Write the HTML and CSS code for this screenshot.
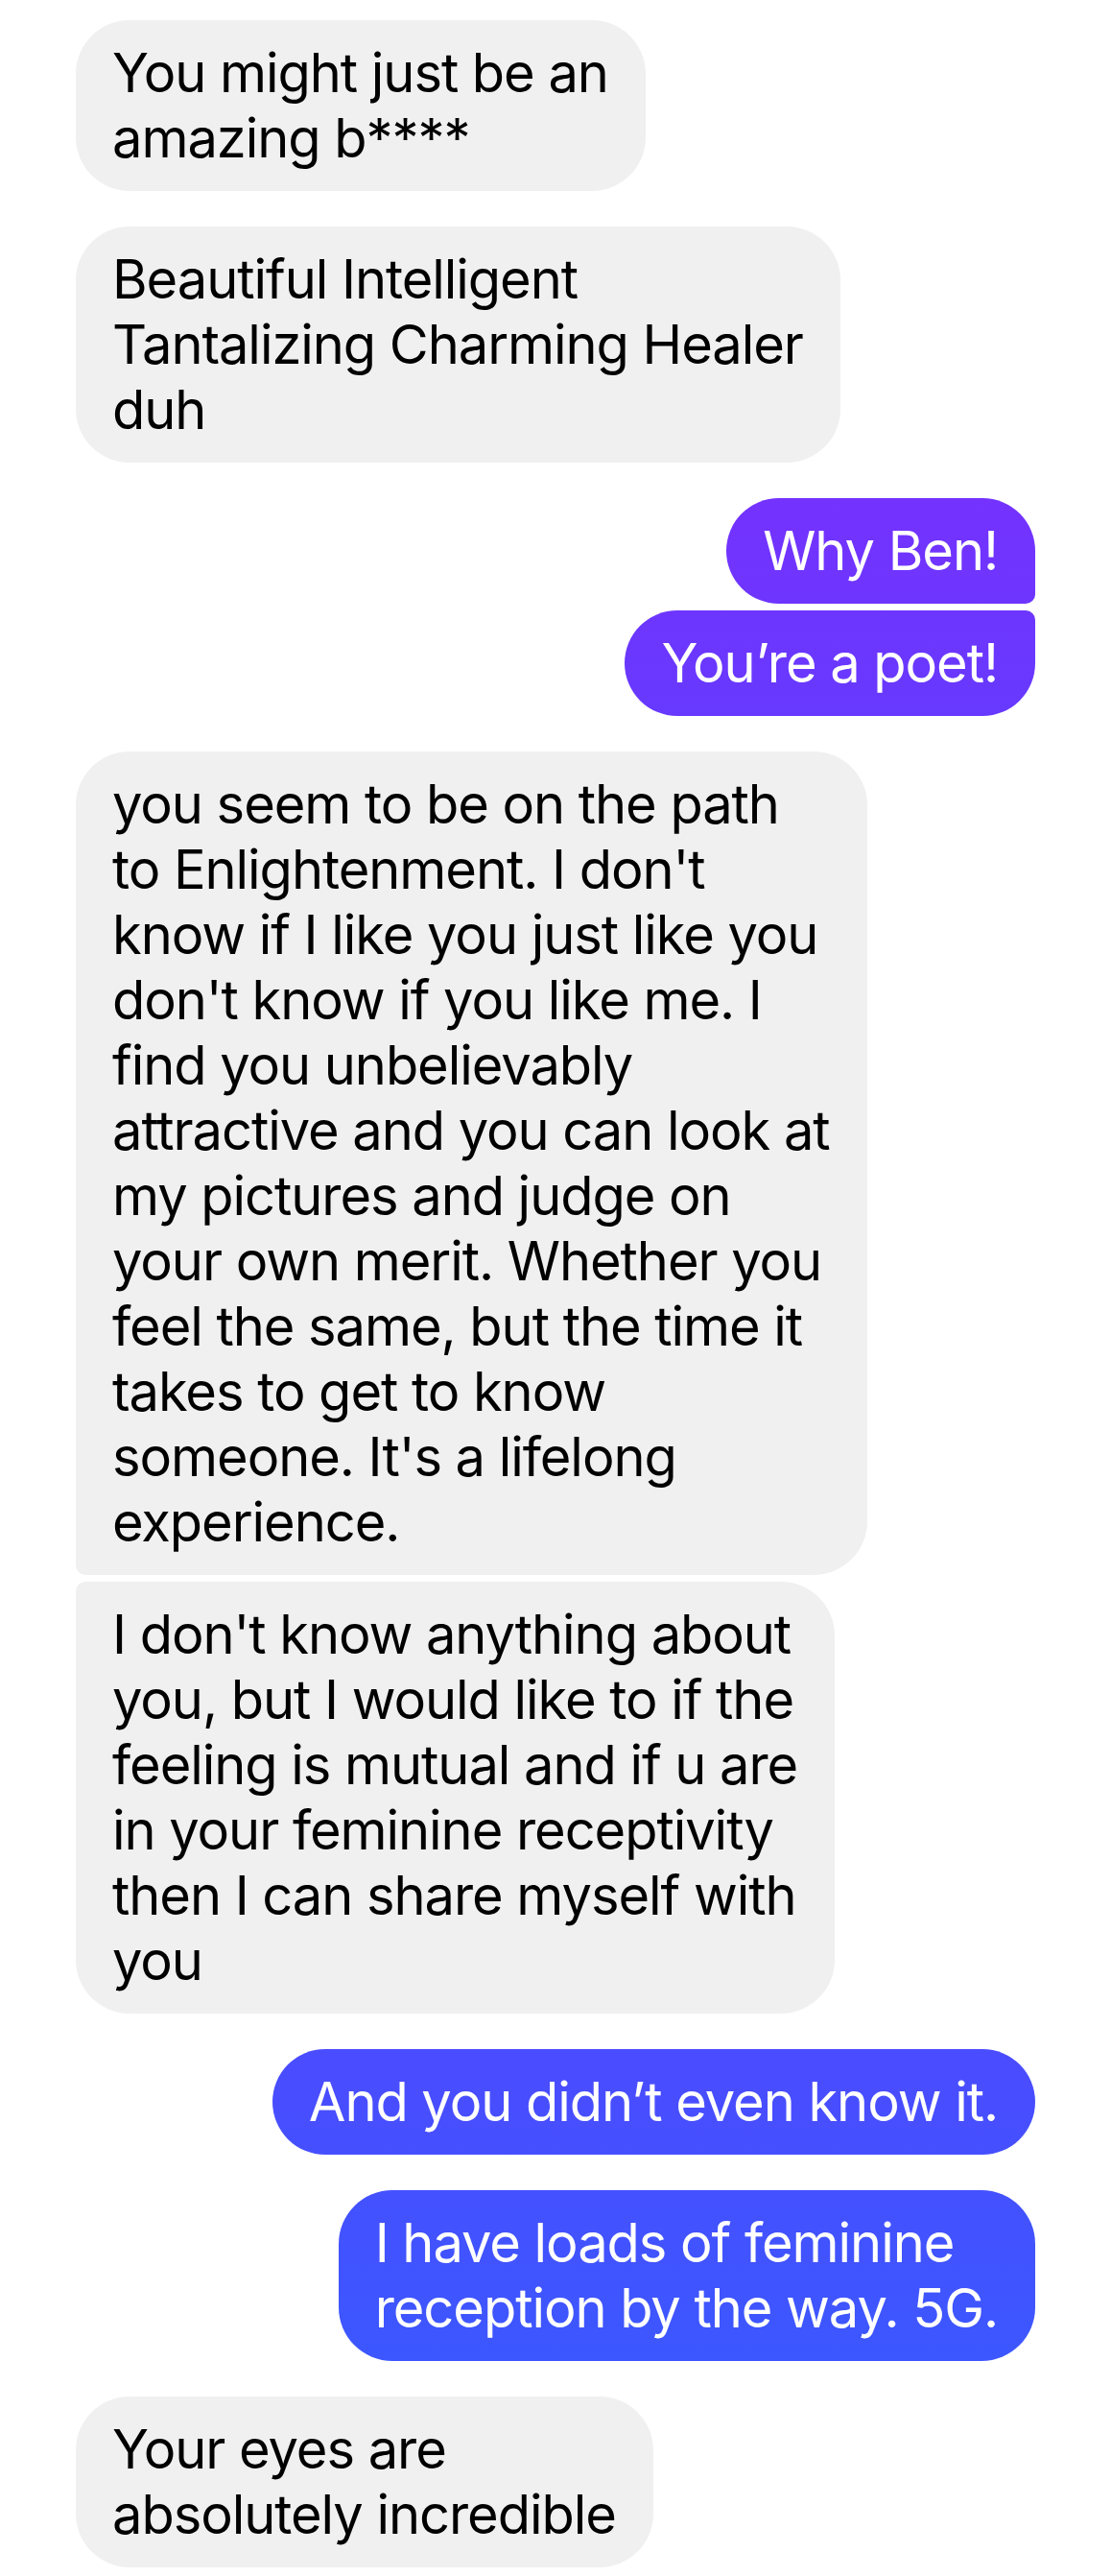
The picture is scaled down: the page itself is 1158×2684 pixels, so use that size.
FILE: index.html
```html
<!DOCTYPE html>
<html lang="en">
<head>
    <meta charset="UTF-8">
    <meta name="viewport" content="width=device-width, initial-scale=1.0">
    <title>Chat</title>
    <link rel="stylesheet" href="styles.css">
</head>
<body>

<div class="thread">
    <!-- them -->
    <div class="group in">
        <div class="bubble">You might just be an<br>amazing b****</div>
    </div>

    <div class="group in">
        <div class="bubble">Beautiful Intelligent<br>Tantalizing Charming Healer<br>duh</div>
    </div>

    <!-- me -->
    <div class="group out">
        <div class="bubble">Why Ben!</div>
        <div class="bubble">You’re a poet!</div>
    </div>

    <div class="group in">
        <div class="bubble">you seem to be on the path<br>to Enlightenment. I don't<br>know if I like you just like you<br>don't know if you like me. I<br>find you unbelievably<br>attractive and you can look at<br>my pictures and judge on<br>your own merit. Whether you<br>feel the same, but the time it<br>takes to get to know<br>someone. It's a lifelong<br>experience.</div>
        <div class="bubble">I don't know anything about<br>you, but I would like to if the<br>feeling is mutual and if u are<br>in your feminine receptivity<br>then I can share myself with<br>you</div>
    </div>

    <div class="group out">
        <div class="bubble">And you didn’t even know it.</div>
    </div>

    <div class="group out">
        <div class="bubble">I have loads of feminine<br>reception by the way. 5G.</div>
    </div>

    <div class="group in">
        <div class="bubble">Your eyes are<br>absolutely incredible</div>
    </div>
</div>

</body>
</html>
```

FILE: styles.css
```css
body {
    margin: 0;
    padding: 0;
    background-color: #fff;
    font-family: Inter, "Liberation Sans", Arial, sans-serif;
}
.thread {
    display: flex;
    flex-direction: column;
    gap: 37px;
    padding: 21px 79px 0;
}
.group {
    display: flex;
    flex-direction: column;
    gap: 7px;
}
.group.in {
    align-items: flex-start;
}
.group.out {
    align-items: flex-end;
}
.bubble {
    padding: 21px 39px 21px 38px;
    font-size: 56px;
    line-height: 68px;
    letter-spacing: -1.05px;
    border-radius: 56px;
    white-space: nowrap;
}
.in .bubble {
    background-color: #f0f0f0;
    color: #000;
}
.out .bubble {
    color: #fff;
    background-color: #5a40ff;
    background-image: linear-gradient(180deg, #7432ff 520px, #6739ff 746px, #4a4cff 2137px, #3c57ff 2460px);
    background-attachment: fixed;
}
/* grouped corners */
.in .bubble:first-child:not(:last-child) {
    border-bottom-left-radius: 10px;
}
.in .bubble:last-child:not(:first-child) {
    border-top-left-radius: 10px;
}
.out .bubble:first-child:not(:last-child) {
    border-bottom-right-radius: 10px;
}
.out .bubble:last-child:not(:first-child) {
    border-top-right-radius: 10px;
}
```
